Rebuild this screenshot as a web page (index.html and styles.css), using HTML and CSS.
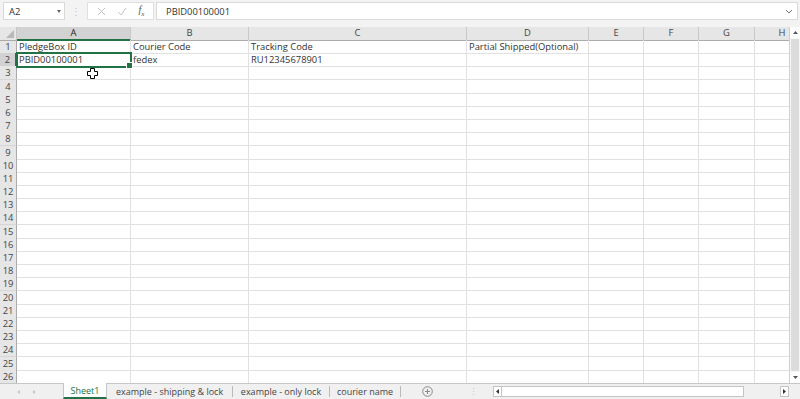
FILE: index.html
```html
<!DOCTYPE html>
<html>
<head>
<meta charset="utf-8">
<link rel="stylesheet" href="styles.css">
</head>
<body>
<div class="fbar">
  <div class="namebox"><span>A2</span><span class="caret"></span></div>
  <div class="dots">⋮</div>
  <div class="btns">
    <svg width="9" height="9" viewBox="0 0 9 9"><path d="M1 1L8 8M8 1L1 8" stroke="#c4c4c4" stroke-width="1" fill="none"/></svg>
    <svg width="10" height="9" viewBox="0 0 10 9"><path d="M1 5L4 8L9 1" stroke="#c4c4c4" stroke-width="1" fill="none"/></svg>
    <span class="fx">f<sub>x</sub></span>
  </div>
  <div class="formula"><span>PBID00100001</span><svg width="8" height="5" viewBox="0 0 8 5"><path d="M1 1L4 4L7 1" stroke="#777" fill="none"/></svg></div>
</div>
<div class="gap"></div>
<div class="sheet">
  <div class="grid">
    <div class="row head">
      <div class="corner"></div><div class="ch on">A</div><div class="ch">B</div><div class="ch">C</div><div class="ch">D</div><div class="ch">E</div><div class="ch">F</div><div class="ch">G</div><div class="ch">H</div>
    </div>
    <div class="row"><div class="rh">1</div><div class="c">PledgeBox ID</div><div class="c">Courier Code</div><div class="c">Tracking Code</div><div class="c">Partial Shipped(Optional)</div><div class="c"></div><div class="c"></div><div class="c"></div><div class="c"></div></div>
    <div class="row"><div class="rh on">2</div><div class="c sel">PBID00100001</div><div class="c">fedex</div><div class="c">RU12345678901</div><div class="c"></div><div class="c"></div><div class="c"></div><div class="c"></div><div class="c"></div></div>
    <div class="row"><div class="rh">3</div><div class="c"></div><div class="c"></div><div class="c"></div><div class="c"></div><div class="c"></div><div class="c"></div><div class="c"></div><div class="c"></div></div>
    <div class="row"><div class="rh">4</div><div class="c"></div><div class="c"></div><div class="c"></div><div class="c"></div><div class="c"></div><div class="c"></div><div class="c"></div><div class="c"></div></div>
    <div class="row"><div class="rh">5</div><div class="c"></div><div class="c"></div><div class="c"></div><div class="c"></div><div class="c"></div><div class="c"></div><div class="c"></div><div class="c"></div></div>
    <div class="row"><div class="rh">6</div><div class="c"></div><div class="c"></div><div class="c"></div><div class="c"></div><div class="c"></div><div class="c"></div><div class="c"></div><div class="c"></div></div>
    <div class="row"><div class="rh">7</div><div class="c"></div><div class="c"></div><div class="c"></div><div class="c"></div><div class="c"></div><div class="c"></div><div class="c"></div><div class="c"></div></div>
    <div class="row"><div class="rh">8</div><div class="c"></div><div class="c"></div><div class="c"></div><div class="c"></div><div class="c"></div><div class="c"></div><div class="c"></div><div class="c"></div></div>
    <div class="row"><div class="rh">9</div><div class="c"></div><div class="c"></div><div class="c"></div><div class="c"></div><div class="c"></div><div class="c"></div><div class="c"></div><div class="c"></div></div>
    <div class="row"><div class="rh">10</div><div class="c"></div><div class="c"></div><div class="c"></div><div class="c"></div><div class="c"></div><div class="c"></div><div class="c"></div><div class="c"></div></div>
    <div class="row"><div class="rh">11</div><div class="c"></div><div class="c"></div><div class="c"></div><div class="c"></div><div class="c"></div><div class="c"></div><div class="c"></div><div class="c"></div></div>
    <div class="row"><div class="rh">12</div><div class="c"></div><div class="c"></div><div class="c"></div><div class="c"></div><div class="c"></div><div class="c"></div><div class="c"></div><div class="c"></div></div>
    <div class="row"><div class="rh">13</div><div class="c"></div><div class="c"></div><div class="c"></div><div class="c"></div><div class="c"></div><div class="c"></div><div class="c"></div><div class="c"></div></div>
    <div class="row"><div class="rh">14</div><div class="c"></div><div class="c"></div><div class="c"></div><div class="c"></div><div class="c"></div><div class="c"></div><div class="c"></div><div class="c"></div></div>
    <div class="row"><div class="rh">15</div><div class="c"></div><div class="c"></div><div class="c"></div><div class="c"></div><div class="c"></div><div class="c"></div><div class="c"></div><div class="c"></div></div>
    <div class="row"><div class="rh">16</div><div class="c"></div><div class="c"></div><div class="c"></div><div class="c"></div><div class="c"></div><div class="c"></div><div class="c"></div><div class="c"></div></div>
    <div class="row"><div class="rh">17</div><div class="c"></div><div class="c"></div><div class="c"></div><div class="c"></div><div class="c"></div><div class="c"></div><div class="c"></div><div class="c"></div></div>
    <div class="row"><div class="rh">18</div><div class="c"></div><div class="c"></div><div class="c"></div><div class="c"></div><div class="c"></div><div class="c"></div><div class="c"></div><div class="c"></div></div>
    <div class="row"><div class="rh">19</div><div class="c"></div><div class="c"></div><div class="c"></div><div class="c"></div><div class="c"></div><div class="c"></div><div class="c"></div><div class="c"></div></div>
    <div class="row"><div class="rh">20</div><div class="c"></div><div class="c"></div><div class="c"></div><div class="c"></div><div class="c"></div><div class="c"></div><div class="c"></div><div class="c"></div></div>
    <div class="row"><div class="rh">21</div><div class="c"></div><div class="c"></div><div class="c"></div><div class="c"></div><div class="c"></div><div class="c"></div><div class="c"></div><div class="c"></div></div>
    <div class="row"><div class="rh">22</div><div class="c"></div><div class="c"></div><div class="c"></div><div class="c"></div><div class="c"></div><div class="c"></div><div class="c"></div><div class="c"></div></div>
    <div class="row"><div class="rh">23</div><div class="c"></div><div class="c"></div><div class="c"></div><div class="c"></div><div class="c"></div><div class="c"></div><div class="c"></div><div class="c"></div></div>
    <div class="row"><div class="rh">24</div><div class="c"></div><div class="c"></div><div class="c"></div><div class="c"></div><div class="c"></div><div class="c"></div><div class="c"></div><div class="c"></div></div>
    <div class="row"><div class="rh">25</div><div class="c"></div><div class="c"></div><div class="c"></div><div class="c"></div><div class="c"></div><div class="c"></div><div class="c"></div><div class="c"></div></div>
    <div class="row"><div class="rh">26</div><div class="c"></div><div class="c"></div><div class="c"></div><div class="c"></div><div class="c"></div><div class="c"></div><div class="c"></div><div class="c"></div></div>
    <svg class="cursor" width="11" height="11" viewBox="0 0 11 11"><path d="M3.5 0.5H7.5V3.5H10.5V7.5H7.5V10.5H3.5V7.5H0.5V3.5H3.5Z" fill="#fff" stroke="#000" stroke-width="1"/></svg>
  </div>
  <div class="vscroll">
    <div class="varrow"><svg width="5" height="3" viewBox="0 0 5 3"><path d="M0 3L2.5 0L5 3Z" fill="#555"/></svg></div>
    <div class="vthumb"></div>
    <div class="varrow"><svg width="5" height="3" viewBox="0 0 5 3"><path d="M0 0L2.5 3L5 0Z" fill="#555"/></svg></div>
  </div>
</div>
<div class="tabbar">
  <div class="nav"><span class="tri l"></span><span class="tri r"></span></div>
  <div class="tab active">Sheet1</div>
  <div class="tab w1">example - shipping &amp; lock</div>
  <div class="tab w2">example - only lock</div>
  <div class="tab w3">courier name</div>
  <div class="add"><svg width="11" height="11" viewBox="0 0 11 11"><circle cx="5.5" cy="5.5" r="4.8" fill="none" stroke="#888"/><path d="M5.5 3V8M3 5.5H8" stroke="#888"/></svg></div>
  <div class="tdots">⋮</div>
  <div class="hscroll">
    <div class="harrow"><svg width="3" height="5" viewBox="0 0 3 5"><path d="M3 0L0 2.5L3 5Z" fill="#333"/></svg></div>
    <div class="htrack"></div>
    <div class="hgray"></div>
    <div class="harrow"><svg width="3" height="5" viewBox="0 0 3 5"><path d="M0 0L3 2.5L0 5Z" fill="#333"/></svg></div>
  </div>
</div>
</body>
</html>
```
FILE: styles.css
```css
* { box-sizing: border-box; margin: 0; padding: 0; }
body {
  width: 800px; height: 399px; overflow: hidden;
  background: #f3f3f3;
  font-family: "Open Sans", "Liberation Sans", sans-serif;
  font-size: 9.4px; color: #222;
}
.fbar { height: 22px; display: flex; align-items: center; padding: 0 2px 0 3px; }
.namebox {
  width: 62px; height: 18px; background: #fff; border: 1px solid #d9d9d9;
  display: flex; align-items: center; justify-content: space-between;
  padding: 0 3px 0 5px; color: #333;
}
.caret { width: 0; height: 0; border-left: 2.5px solid transparent; border-right: 2.5px solid transparent; border-top: 3px solid #666; }
.dots { width: 22px; text-align: center; color: #c4c4c4; font-size: 10px; }
.btns {
  width: 67px; height: 18px; background: #fff; border: 1px solid #e0e0e0;
  display: flex; align-items: center; justify-content: space-around; padding: 0 3px;
}
.fx { font-family: "Liberation Serif", serif; font-style: italic; color: #555; font-size: 10px; }
.fx sub { font-size: 7px; }
.formula {
  flex: 1; height: 18px; background: #fff; border: 1px solid #d9d9d9; margin-left: 2px;
  display: flex; align-items: center; justify-content: space-between; padding: 0 4px 0 9px; color: #333;
}
.gap { height: 5px; }
.sheet { display: flex; height: 356px; background: #fff; }
.grid { width: 789px; overflow: hidden; position: relative; }
.row {
  display: grid;
  grid-template-columns: 17px 114px 118px 218px 122px 55px 55px 56px 55px;
  height: 13.2px;
}
.row > div { white-space: nowrap; line-height: 13px; }
.c { border-right: 1px solid #e1e1e1; border-bottom: 1px solid #e1e1e1; padding-left: 2px; color: #333; position: relative; }
.row.head { height: 13px; background: #e6e6e6; }
.row.head > div { line-height: 12px; }
.corner { border-right: 1px solid #c6c6c6; border-bottom: 1px solid #ababab; position: relative; }
.corner::after {
  content: ""; position: absolute; right: 2px; bottom: 2px; width: 0; height: 0;
  border-left: 8px solid transparent; border-bottom: 8px solid #b8b8b8;
}
.ch { text-align: center; color: #444; border-right: 1px solid #c9c9c9; border-bottom: 1px solid #ababab; }
.ch.on { background: #d2d2d2; border-bottom: 2px solid #217346; color: #222; }
.rh { background: #e6e6e6; text-align: center; color: #444; border-right: 1px solid #ababab; border-bottom: 1px solid #d6d6d6; }
.rh.on { background: #d2d2d2; border-right: 2px solid #217346; }
.sel { outline: 2px solid #217346; outline-offset: -1px; z-index: 1; }
.sel::after { content: ""; position: absolute; right: -3px; bottom: -3px; width: 5px; height: 5px; background: #217346; border: 1px solid #fff; }
.cursor { position: absolute; left: 87px; top: 41px; z-index: 2; }
.vscroll { width: 11px; background: #f7f7f7; border-left: 1px solid #cfcfcf; display: flex; flex-direction: column; }
.varrow { height: 11px; display: flex; align-items: center; justify-content: center; background: #fff; }
.vthumb { flex: 1; background: #dcdcdc; margin: 1px 1px; }
.tabbar { height: 16px; display: flex; align-items: stretch; background: #f0f0f0; border-top: 1px solid #c6c6c6; color: #444; font-size: 9px; }
.nav { width: 63px; display: flex; align-items: center; padding-left: 17px; gap: 13px; }
.tri { width: 0; height: 0; border-top: 2.5px solid transparent; border-bottom: 2.5px solid transparent; }
.tri.l { border-right: 3px solid #c8c8c8; }
.tri.r { border-left: 3px solid #c8c8c8; }
.tab { display: flex; align-items: center; justify-content: center; border-right: 1px solid #b9b9b9; margin: 2px 0; }
.tab.active { width: 44px; margin: -1px 0 0; background: #fff; color: #217346; border-bottom: 2px solid #217346; border-left: 1px solid #c6c6c6; border-right: 1px solid #c6c6c6; }
.w1 { width: 126px; }
.w2 { width: 97px; }
.w3 { width: 71px; }
.add { width: 52px; display: flex; align-items: center; justify-content: center; }
.tdots { width: 40px; display: flex; align-items: center; justify-content: center; color: #c4c4c4; }
.hscroll { width: 296px; display: flex; align-items: center; padding: 2px 0; }
.harrow { width: 9px; height: 11px; border: 1px solid #c4c4c4; background: #fff; display: flex; align-items: center; justify-content: center; }
.htrack { width: 242px; height: 11px; background: #fff; border: 1px solid #c4c4c4; border-left: 0; }
.hgray { width: 36px; height: 11px; }
```
